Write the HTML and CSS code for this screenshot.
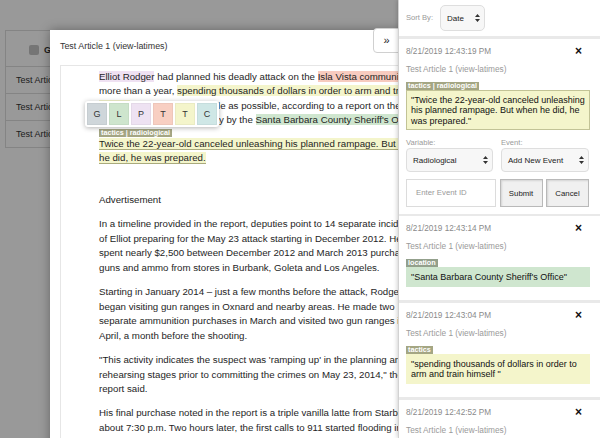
FILE: index.html
```html
<!DOCTYPE html>
<html lang="en">
<head>
<meta charset="utf-8">
<title>Test Article 1 (view-latimes)</title>
<link rel="stylesheet" href="styles.css">
</head>
<body>
<div class="page">
  <div class="bg-table">
    <div class="bg-head"><span class="bg-check"></span><b>Gold Standard</b></div>
    <div class="bg-row">Test Article 1 (view-latimes)</div>
    <div class="bg-row">Test Article 2 (view-latimes)</div>
    <div class="bg-row">Test Article 3 (view-latimes)</div>
  </div>
</div>
<div class="backdrop"></div>

<div class="modal">
  <div class="modal-head">Test Article 1 (view-latimes)</div>
  <div class="modal-body">
    <p class="lead"><span class="hl hl-p">Elliot Rodger</span> had planned his deadly attack on the <span class="hl hl-t">Isla Vista community</span> for<br>more than a year, <span class="hl hl-y">spending thousands of dollars in order to arm and train<br>himself</span> to kill as many people as possible, according to a report on the<br>massacre released Thursday by the <span class="hl hl-l">Santa Barbara County Sheriff's Office</span>.</p>
    <span class="anno-tag">tactics | radiological</span>
    <p class="sel-p"><span class="hl hl-y sel">Twice the 22-year-old canceled unleashing his planned rampage. But when<br>he did, he was prepared.</span></p>
    <p class="ad">Advertisement</p>
    <p>In a timeline provided in the report, deputies point to 14 separate incidents<br>of Elliot preparing for the May 23 attack starting in December 2012. He<br>spent nearly $2,500 between December 2012 and March 2013 purchasing<br>guns and ammo from stores in Burbank, Goleta and Los Angeles.</p>
    <p>Starting in January 2014 – just a few months before the attack, Rodger<br>began visiting gun ranges in Oxnard and nearby areas. He made two<br>separate ammunition purchases in March and visited two gun ranges in<br>April, a month before the shooting.</p>
    <p>"This activity indicates the suspect was 'ramping up' in the planning and<br>rehearsing stages prior to committing the crimes on May 23, 2014," the<br>report said.</p>
    <p>His final purchase noted in the report is a triple vanilla latte from Starbucks<br>about 7:30 p.m. Two hours later, the first calls to 911 started flooding in.</p>
  </div>
  <div class="toolbar">
    <button class="tb tb-g">G</button>
    <button class="tb tb-l">L</button>
    <button class="tb tb-p">P</button>
    <button class="tb tb-t">T</button>
    <button class="tb tb-y">T</button>
    <button class="tb tb-c">C</button>
  </div>
</div>

<button class="collapse">»</button>

<aside class="panel">
  <div class="panel-head">
    <span class="muted-label">Sort By:</span>
    <div class="select sort-select"><span>Date</span><svg class="arrows" width="5" height="8" viewBox="0 0 5 8"><path d="M2.5 0L5 3H0z M2.5 8L5 5H0z" fill="#333"/></svg></div>
  </div>

  <div class="card">
    <div class="card-top"><span class="date">8/21/2019 12:43:19 PM</span><span class="close">×</span></div>
    <div class="src">Test Article 1 (view-latimes)</div>
    <span class="tag tag-t">tactics | radiological</span>
    <div class="quote q-y q-sel">"Twice the 22-year-old canceled unleashing his planned rampage. But when he did, he was prepared."</div>
    <div class="form">
      <div class="form-row">
        <div class="field"><div class="muted-label">Variable:</div><div class="select"><span>Radiological</span><svg class="arrows" width="5" height="8" viewBox="0 0 5 8"><path d="M2.5 0L5 3H0z M2.5 8L5 5H0z" fill="#333"/></svg></div></div>
        <div class="field"><div class="muted-label">Event:</div><div class="select"><span>Add New Event</span><svg class="arrows" width="5" height="8" viewBox="0 0 5 8"><path d="M2.5 0L5 3H0z M2.5 8L5 5H0z" fill="#333"/></svg></div></div>
      </div>
      <div class="action-row">
        <div class="input">Enter Event ID</div>
        <div class="btn">Submit</div>
        <div class="btn">Cancel</div>
      </div>
    </div>
  </div>

  <div class="card">
    <div class="card-top"><span class="date">8/21/2019 12:43:14 PM</span><span class="close">×</span></div>
    <div class="src">Test Article 1 (view-latimes)</div>
    <span class="tag tag-l">location</span>
    <div class="quote q-l">"Santa Barbara County Sheriff's Office"</div>
  </div>

  <div class="card">
    <div class="card-top"><span class="date">8/21/2019 12:43:04 PM</span><span class="close">×</span></div>
    <div class="src">Test Article 1 (view-latimes)</div>
    <span class="tag tag-t">tactics</span>
    <div class="quote q-y">"spending thousands of dollars in order to arm and train himself "</div>
  </div>

  <div class="card">
    <div class="card-top"><span class="date">8/21/2019 12:42:52 PM</span><span class="close">×</span></div>
    <div class="src">Test Article 1 (view-latimes)</div>
  </div>
</aside>
</body>
</html>
```

FILE: styles.css
```css
* { box-sizing: border-box; }
html, body {
  margin: 0;
  width: 600px;
  height: 438px;
  overflow: hidden;
  background: #fff;
  font-family: "Liberation Sans", Helvetica, Arial, sans-serif;
  color: #222;
}

/* page behind the overlay */
.page { padding: 30px 0 0 5px; }
.bg-table {
  width: 420px;
  border: 1px solid #dcdcdc;
  font-size: 9px;
  color: #333;
}
.bg-head {
  height: 35px;
  display: flex;
  align-items: center;
  padding-left: 23px;
  gap: 5px;
  padding-top: 3px;
}
.bg-check {
  width: 10px;
  height: 10px;
  border-radius: 2px;
  background: #c4c4c4;
}
.bg-row {
  height: 27px;
  line-height: 27px;
  padding-left: 10px;
  border-top: 1px solid #dcdcdc;
}
.backdrop {
  position: absolute;
  inset: 0;
  background: rgba(0, 0, 0, 0.4);
}

/* modal */
.modal {
  position: absolute;
  left: 50px;
  top: 30px;
  width: 420px;
  height: 440px;
  background: #fff;
  box-shadow: 0 0 10px rgba(0, 0, 0, 0.35);
}
.modal-head {
  height: 35px;
  padding: 10px 0 0 10px;
  font-size: 8.9px;
  line-height: 12px;
  color: #333;
}
.modal-body {
  margin-left: 10px;
  height: 400px;
  border: 1px solid #e6e6e6;
  border-right: none;
  padding: 3.5px 0 0 38px;
  font-size: 9.7px;
  line-height: 14.6px;
  white-space: nowrap;
  overflow: hidden;
  color: #1e1e1e;
}
.modal-body p { margin: 9.5px 0 0; }
.modal-body p.lead { margin: 0; }
.modal-body p.sel-p { margin: 0; }
.modal-body p.ad { margin-top: 27px; }
.hl-p { background: #efe1f2; }
.hl-t { background: #f7cbbf; }
.hl-y { background: #f4f5cb; }
.hl-l { background: #cfe6cf; }
.hl.sel { border-bottom: 1px solid #a9aa7c; }
.anno-tag {
  display: block;
  width: fit-content;
  margin-top: 1px;
  padding: 0 2px;
  background: #a4a683;
  color: #fff;
  font-size: 7.2px;
  font-weight: bold;
  line-height: 8px;
}

.toolbar {
  position: absolute;
  left: 35px;
  top: 71px;
  display: flex;
  gap: 2px;
  padding: 2px;
  background: #fff;
  border-radius: 3px;
  box-shadow: 0 1px 5px rgba(0, 0, 0, 0.3);
}
.tb {
  width: 20px;
  height: 22px;
  border: 1px solid rgba(0, 0, 0, 0.04);
  padding: 0;
  font-family: inherit;
  font-size: 9px;
  color: #333;
}
.tb-g { background: #cfd6da; }
.tb-l { background: #cee5cd; }
.tb-p { background: #eee2f2; }
.tb-t { background: #f8cfc2; }
.tb-y { background: #f4f5cb; }
.tb-c { background: #cfe7e6; }

.collapse {
  position: absolute;
  left: 373px;
  top: 28px;
  width: 27px;
  height: 25px;
  padding: 0 0 2px;
  background: #fff;
  border: 1px solid #d0d0d0;
  border-radius: 4px 0 0 4px;
  font-family: inherit;
  font-size: 11px;
  color: #222;
}

/* right panel */
.panel {
  position: absolute;
  top: 0;
  right: 0;
  bottom: 0;
  width: 202px;
  background: #e9e9e9;
  border-left: 1px solid #d2d2d2;
  box-shadow: -1px 0 4px rgba(0, 0, 0, 0.18);
  display: flex;
  flex-direction: column;
  gap: 2.5px;
  overflow: hidden;
}
.panel-head {
  flex: none;
  height: 36px;
  background: #fff;
  display: flex;
  align-items: center;
  padding-left: 7px;
  gap: 7px;
}
.muted-label {
  font-size: 7.6px;
  line-height: 10px;
  color: #9a9a9a;
}
.select {
  height: 24px;
  display: flex;
  align-items: center;
  justify-content: space-between;
  padding: 0 4px 0 6px;
  background: #f7f7f7;
  border: 1px solid #dedede;
  border-radius: 4px;
  font-size: 8px;
  color: #222;
}
.sort-select {
  width: 45px;
  height: 26px;
  padding-left: 6px;
  border-radius: 5px;
}
.card {
  flex: none;
  background: #fff;
  padding: 7px 10px 6.5px 7px;
}
.card-top {
  display: flex;
  justify-content: space-between;
  align-items: center;
  height: 11px;
}
.date {
  font-size: 8.2px;
  line-height: 11px;
  color: #8a8a8a;
}
.close {
  margin-right: 8px;
  font-size: 12px;
  line-height: 11px;
  font-weight: bold;
  color: #111;
}
.src {
  margin-top: 7px;
  font-size: 8.3px;
  line-height: 11px;
  color: #9a9a9a;
}
.tag {
  display: block;
  width: fit-content;
  margin-top: 7px;
  padding: 0 2px;
  font-size: 7.2px;
  font-weight: bold;
  line-height: 8px;
  color: #fff;
}
.tag-t { background: #a4a683; }
.tag-l { background: #93a08c; }
.quote {
  margin-bottom: 7px;
  padding: 4px 2px 3px 4px;
  border: 1px solid transparent;
  font-size: 9px;
  line-height: 10.5px;
  color: #111;
}
.q-y { background: #f4f5cb; }
.q-l { background: #cfe6cf; }
.q-sel { border-color: #c2c396; }
.form { padding-top: 1px; }
.form-row {
  display: grid;
  grid-template-columns: 87px 88px;
  gap: 8px;
}
.action-row {
  margin-top: 7px;
  display: grid;
  grid-template-columns: 90px 43px 43px;
  gap: 3.5px;
  height: 28px;
}
.input {
  border: 1px solid #dcdcdc;
  font-size: 7.8px;
  line-height: 26px;
  padding-left: 9px;
  color: #999;
}
.btn {
  display: flex;
  align-items: center;
  justify-content: center;
  background: #f0f0f0;
  border: 1px solid #b9b9b9;
  box-shadow: inset 1px 1px 2px rgba(0, 0, 0, 0.12);
  font-size: 7.8px;
  color: #222;
}
```
